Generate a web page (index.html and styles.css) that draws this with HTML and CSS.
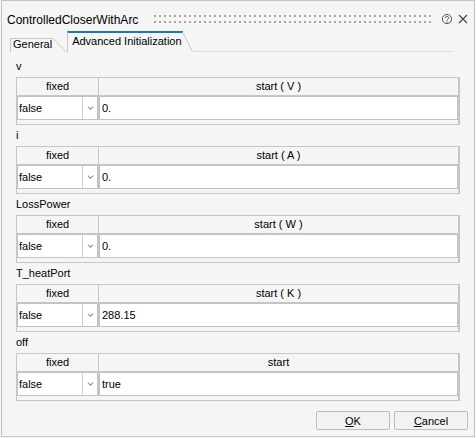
FILE: index.html
```html
<!DOCTYPE html>
<html lang="en">
<head>
<meta charset="UTF-8">
<meta name="viewport" content="width=device-width, initial-scale=1.0">
<title>ControlledCloserWithArc</title>
<link rel="stylesheet" href="styles.css">
</head>
<body>
<div class="window">
    <div class="titlebar">
        <span class="title">ControlledCloserWithArc</span>
        <div class="grip"><span></span><span></span></div>
        <svg class="help-icon" width="12" height="12" viewBox="0 0 12 12">
            <circle cx="6" cy="6" r="4.6" fill="none" stroke="#555" stroke-width="1"/>
            <path d="M4.4 4.9a1.6 1.6 0 1 1 2.3 1.4c-.5.3-.7.6-.7 1.1v.3" fill="none" stroke="#555" stroke-width="1"/>
            <circle cx="6" cy="8.9" r=".6" fill="#555"/>
        </svg>
        <svg class="close-icon" width="10" height="10" viewBox="0 0 10 10">
            <path d="M1 1L9 9M9 1L1 9" stroke="#444" stroke-width="1.1"/>
        </svg>
    </div>

    <div class="tabs">
        <div class="tab">
            <span class="tab-label">General</span>
            <svg class="tab-edge" width="14" height="14" viewBox="0 0 14 14">
                <path d="M0 0.5L13.5 14" stroke="#c8c8c8" stroke-width="1" fill="none"/>
            </svg>
        </div>
        <div class="tab active">
            <span class="tab-label">Advanced Initialization</span>
            <svg class="tab-edge" width="11" height="21" viewBox="0 0 11 21">
                <path d="M0 1L1 1" stroke="#1a7aae" stroke-width="2"/>
                <path d="M0.5 1L10.5 20.5" stroke="#c8c8c8" stroke-width="1" fill="none"/>
            </svg>
        </div>
        <div class="tab-line"></div>
    </div>

    <div class="content">
        <div class="group">
            <div class="group-label">v</div>
            <div class="param-table">
                <div class="param-head">
                    <div class="col-fixed">fixed</div>
                    <div class="col-start">start ( V )</div>
                </div>
                <div class="param-row">
                    <div class="col-fixed">
                        <div class="combo">
                            <span class="combo-text">false</span>
                            <span class="combo-btn"><svg width="7" height="4" viewBox="0 0 7 4"><path d="M0.8 0.6L3.5 3.2L6.2 0.6" stroke="#9a9a9a" stroke-width="1.2" fill="none"/></svg></span>
                        </div>
                    </div>
                    <div class="col-start"><div class="text-input">0.</div></div>
                </div>
            </div>
        </div>

        <div class="group">
            <div class="group-label">i</div>
            <div class="param-table">
                <div class="param-head">
                    <div class="col-fixed">fixed</div>
                    <div class="col-start">start ( A )</div>
                </div>
                <div class="param-row">
                    <div class="col-fixed">
                        <div class="combo">
                            <span class="combo-text">false</span>
                            <span class="combo-btn"><svg width="7" height="4" viewBox="0 0 7 4"><path d="M0.8 0.6L3.5 3.2L6.2 0.6" stroke="#9a9a9a" stroke-width="1.2" fill="none"/></svg></span>
                        </div>
                    </div>
                    <div class="col-start"><div class="text-input">0.</div></div>
                </div>
            </div>
        </div>

        <div class="group">
            <div class="group-label">LossPower</div>
            <div class="param-table">
                <div class="param-head">
                    <div class="col-fixed">fixed</div>
                    <div class="col-start">start ( W )</div>
                </div>
                <div class="param-row">
                    <div class="col-fixed">
                        <div class="combo">
                            <span class="combo-text">false</span>
                            <span class="combo-btn"><svg width="7" height="4" viewBox="0 0 7 4"><path d="M0.8 0.6L3.5 3.2L6.2 0.6" stroke="#9a9a9a" stroke-width="1.2" fill="none"/></svg></span>
                        </div>
                    </div>
                    <div class="col-start"><div class="text-input">0.</div></div>
                </div>
            </div>
        </div>

        <div class="group">
            <div class="group-label">T_heatPort</div>
            <div class="param-table">
                <div class="param-head">
                    <div class="col-fixed">fixed</div>
                    <div class="col-start">start ( K )</div>
                </div>
                <div class="param-row">
                    <div class="col-fixed">
                        <div class="combo">
                            <span class="combo-text">false</span>
                            <span class="combo-btn"><svg width="7" height="4" viewBox="0 0 7 4"><path d="M0.8 0.6L3.5 3.2L6.2 0.6" stroke="#9a9a9a" stroke-width="1.2" fill="none"/></svg></span>
                        </div>
                    </div>
                    <div class="col-start"><div class="text-input">288.15</div></div>
                </div>
            </div>
        </div>

        <div class="group">
            <div class="group-label">off</div>
            <div class="param-table">
                <div class="param-head">
                    <div class="col-fixed">fixed</div>
                    <div class="col-start">start</div>
                </div>
                <div class="param-row">
                    <div class="col-fixed">
                        <div class="combo">
                            <span class="combo-text">false</span>
                            <span class="combo-btn"><svg width="7" height="4" viewBox="0 0 7 4"><path d="M0.8 0.6L3.5 3.2L6.2 0.6" stroke="#9a9a9a" stroke-width="1.2" fill="none"/></svg></span>
                        </div>
                    </div>
                    <div class="col-start"><div class="text-input">true</div></div>
                </div>
            </div>
        </div>
    </div>

    <div class="footer">
        <button class="btn"><u>O</u>K</button>
        <button class="btn"><u>C</u>ancel</button>
    </div>
</div>
</body>
</html>
```

FILE: styles.css
```css
* {
    margin: 0;
    padding: 0;
    box-sizing: border-box;
}

body {
    font-family: "Liberation Sans", Arial, sans-serif;
    font-size: 11px;
    color: #000;
    background: #f5f5f5;
}

.window {
    margin-left: 1px;
    width: 474px;
    height: 437px;
    border: 1px solid #c4c4c4;
    background: #f5f5f5;
    display: flex;
    flex-direction: column;
}

/* TITLE BAR */
.titlebar {
    height: 30px;
    padding: 6px 6px 0 5px;
    display: flex;
    align-items: center;
}

.title {
    font-size: 12px;
    padding-top: 2px;
    white-space: nowrap;
}

.grip {
    flex: 1;
    margin-left: 16px;
    display: flex;
    flex-direction: column;
    gap: 4px;
}

.grip span {
    height: 2px;
    background: repeating-linear-gradient(90deg, #a6a6a6 0 2px, transparent 2px 5px);
}

.help-icon {
    margin-left: 7px;
}

.close-icon {
    margin-left: 5px;
}

/* TABS */
.tabs {
    height: 21px;
    padding-left: 8px;
    display: flex;
    align-items: flex-end;
}

.tab {
    display: flex;
    align-items: flex-start;
}

.tab-label {
    height: 14px;
    border-left: 1px solid #c8c8c8;
    border-top: 1px solid #c8c8c8;
    padding: 0 1px 0 2px;
    line-height: 11px;
    white-space: nowrap;
}

.tab.active .tab-label {
    height: 21px;
    border-top: 2px solid #1a7aae;
    padding: 0 0 0 4px;
    line-height: 17px;
}

.tab-line {
    flex: 1;
    margin-right: 21px;
    border-bottom: 1px solid #dcdcdc;
}

/* PARAMETER GROUPS */
.content {
    flex: 1;
    padding: 4px 14px 0 14px;
}

.group-label {
    height: 21px;
    line-height: 21px;
}

.param-table {
    border: 1px solid #c6c6c6;
    border-right-width: 2px;
    padding-bottom: 4px;
}

.param-head {
    display: flex;
    height: 18px;
    border-bottom: 1px solid #c6c6c6;
    line-height: 17px;
    text-align: center;
}

.param-row {
    display: flex;
    height: 24px;
}

.col-fixed {
    width: 82px;
    border-right: 1px solid #c6c6c6;
}

.col-start {
    flex: 1;
}

.combo {
    display: flex;
    height: 24px;
    border: 1px solid #c2c2c2;
    background: #fff;
}

.combo-text {
    flex: 1;
    padding: 1px 0 0 1px;
    line-height: 21px;
    border-right: 1px solid #cfcfcf;
}

.combo-btn {
    width: 14px;
    display: flex;
    justify-content: center;
    align-items: center;
}

.text-input {
    height: 24px;
    border: 1px solid #c2c2c2;
    background: #fff;
    padding: 1px 0 0 2px;
    line-height: 21px;
}

/* BOTTOM */
.footer {
    display: flex;
    justify-content: flex-end;
    gap: 4px;
    padding: 0 6px 6px 0;
}

.btn {
    width: 74px;
    height: 19px;
    font-family: "Liberation Sans", Arial, sans-serif;
    font-size: 11px;
    color: #000;
    background: #f2f2f2;
    border: 1px solid #bdbdbd;
    border-radius: 2px;
}
```
